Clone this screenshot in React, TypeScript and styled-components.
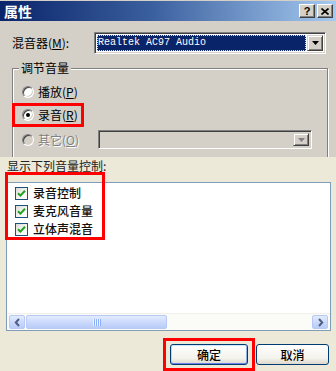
import React from 'react';
import styled, { createGlobalStyle, css } from 'styled-components';

const Global = createGlobalStyle`
  html, body { margin: 0; padding: 0; }
  body {
    width: 336px; height: 371px; overflow: hidden;
    font-family: "Noto Sans CJK SC", "Liberation Sans", sans-serif;
    font-size: 12px; color: #000;
  }
  * { box-sizing: border-box; }
`;

const Window = styled.div`
  width: 336px; height: 371px;
  display: flex; flex-direction: column;
  overflow: hidden;
  background: #d4d0c8;
`;

const TitleBar = styled.div`
  height: 20px; margin-top: 1px;
  display: flex; align-items: center; gap: 2px;
  padding: 0 3px 0 4px;
  background: linear-gradient(to right, #0a246a 0%, #3a5f9e 45%, #a6caf0 100%);
`;

const TitleText = styled.span`
  flex: 1;
  color: #fff; font-weight: bold; font-size: 14px; line-height: 16px;
`;

const CaptionButton = styled.button`
  width: 16px; height: 14px; padding: 0; margin: 0;
  display: flex; align-items: center; justify-content: center;
  background: #d4d0c8;
  border: 1px solid; border-color: #fff #404040 #404040 #fff;
  box-shadow: inset -1px -1px 0 #808080;
  font: bold 11px "Liberation Sans", sans-serif; line-height: 10px; color: #000;
`;

const ClassicPane = styled.div`
  height: 136px; flex: none;
  overflow: hidden;
  padding-top: 11px;
  background: #d4d0c8;
`;

const FieldRow = styled.div`
  display: flex; align-items: center;
  height: 22px; padding: 0 10px 0 12px;
`;

const FieldLabel = styled.span`
  width: 82px; line-height: 14px;
`;

const Sunken = css`
  border: 1px solid; border-color: #808080 #fff #fff #808080;
  box-shadow: inset 1px 1px 0 #404040, inset -1px -1px 0 #d4d0c8;
`;

const Combo = styled.div<{ $disabled?: boolean }>`
  ${Sunken};
  display: flex; align-items: stretch; gap: 1px;
  padding: 2px;
  background: ${p => (p.$disabled ? '#d4d0c8' : '#fff')};
`;

const MixerCombo = styled(Combo)`
  flex: 1; height: 22px;
`;

const SelectedValue = styled.span`
  flex: 1;
  padding-left: 1px;
  background: #0a246a; color: #fff;
  outline: 1px dotted #e8e4a0; outline-offset: -1px;
  font-family: "Liberation Mono", monospace; font-size: 10px; line-height: 16px;
  white-space: pre;
`;

const DropButton = styled.span<{ $disabled?: boolean }>`
  width: 16px; flex: none;
  display: flex; align-items: center; justify-content: center;
  background: #d4d0c8;
  border: 1px solid; border-color: #d4d0c8 #404040 #404040 #d4d0c8;
  box-shadow: inset 1px 1px 0 #fff, inset -1px -1px 0 #808080;
  color: ${p => (p.$disabled ? '#808080' : '#000')};
`;

const GroupBox = styled.fieldset`
  margin: 7px 8px 0 12px; padding: 0;
  height: 140px; min-width: 0;
  border: 1px solid #808080;
  box-shadow: 1px 1px 0 #fff, inset 1px 1px 0 #fff;
`;

const GroupLegend = styled.legend`
  margin-left: 6px; padding: 0 2px;
  line-height: 14px;
  background: #d4d0c8;
`;

const RadioList = styled.div`
  display: flex; flex-direction: column; gap: 5px;
  padding: 8px 0 0 2px;
`;

const RadioRow = styled.label<{ $highlight?: boolean; $stretch?: boolean }>`
  display: flex; align-items: center; gap: 4px;
  height: ${p => (p.$stretch ? '19px' : '18px')};
  width: ${p => (p.$stretch ? 'auto' : 'fit-content')};
  margin-top: ${p => (p.$stretch ? '1px' : '0')};
  padding: 0 3px 0 7px;
  ${p => p.$highlight && css`box-shadow: 0 0 0 3px #f00;`}
`;

const RadioDot = styled.span<{ $checked?: boolean; $disabled?: boolean }>`
  position: relative;
  width: 12px; height: 12px; flex: none;
  border-radius: 50%;
  border: 1px solid; border-color: #808080 #fff #fff #808080;
  box-shadow: inset 1px 1px 0 #404040, inset -1px -1px 0 #d4d0c8;
  background: ${p => (p.$disabled ? '#d4d0c8' : '#fff')};
  ${p => p.$checked && css`
    &::after {
      content: ''; position: absolute; left: 3px; top: 3px;
      width: 4px; height: 4px; border-radius: 50%; background: #000;
    }
  `}
`;

const RadioText = styled.span<{ $disabled?: boolean }>`
  line-height: 14px;
  color: ${p => (p.$disabled ? '#808080' : '#000')};
  text-shadow: ${p => (p.$disabled ? '1px 1px 0 #fff' : 'none')};
  white-space: nowrap;
`;

const OtherCombo = styled(Combo)`
  margin-left: auto; margin-right: 12px;
  width: 214px; height: 19px;
`;

const XpPane = styled.div`
  position: relative;
  flex: 1;
  display: flex; flex-direction: column;
  padding: 2px 5px 0 6px;
  background: #ece9d8;
`;

const SectionLabel = styled.div`
  line-height: 14px; padding-left: 1px;
  color: #222;
`;

const ListBox = styled.div`
  margin-top: 9px;
  height: 149px;
  display: flex; flex-direction: column;
  border: 1px solid #7f9db9;
  background: #fff;
`;

const ListItems = styled.div`
  flex: 1;
  padding: 1px 0 0 8px;
`;

const ListItem = styled.div`
  display: flex; align-items: center; gap: 5px;
  height: 18px;
`;

const CheckBox = styled.span`
  width: 13px; height: 13px; flex: none;
  display: flex; align-items: center; justify-content: center;
  border: 1px solid #1c5180;
  background: linear-gradient(135deg, #dcdcd7 0%, #f6f6f3 60%, #fff 100%);
`;

const ItemText = styled.span`
  line-height: 14px; color: #111; font-weight: 500;
`;

const HScroll = styled.div`
  height: 17px; flex: none;
  display: flex; align-items: stretch;
  padding: 1px 2px;
  background: #fbfbf8;
  border-top: 1px solid #f0efe9;
`;

const ScrollPart = css`
  border: 1px solid #b7c8f4;
  border-radius: 2px;
  background: linear-gradient(to bottom, #e3ebfe 0%, #c8d7fb 60%, #b9ccf8 100%);
  display: flex; align-items: center; justify-content: center;
`;

const ArrowButton = styled.span`
  ${ScrollPart};
  width: 16px;
  color: #4d6185;
`;

const Thumb = styled.span`
  ${ScrollPart};
  width: 141px;
  margin-left: 1px;
`;

const Track = styled.span`
  flex: 1;
`;

const ButtonRow = styled.div`
  display: flex; justify-content: flex-end; gap: 8px;
  margin-top: 13px;
  padding-right: 2px;
`;

const Frame = styled.span`
  display: inline-flex;
  margin: -6px -7px;
  padding: 3px 4px;
  border: 3px solid #f00;
`;

const XpButton = styled.button<{ $default?: boolean }>`
  width: ${p => (p.$default ? '78px' : '73px')}; height: 21px;
  padding: 0;
  border: 1px solid #003c74; border-radius: 3px;
  background: linear-gradient(to bottom, #fff 0%, #f3f2ec 70%, #dcd8cc 100%);
  font-family: "Noto Sans CJK SC", sans-serif; font-size: 12px; font-weight: 500;
  line-height: 14px; color: #000;
  ${p => p.$default && css`
    box-shadow: inset 0 1px 0 #cee7ff, inset 0 -1px 0 #6982ee, inset 1px 0 0 #b8d4fb, inset -1px 0 0 #89ade4;
  `}
`;

const CheckHighlight = styled.div`
  position: absolute; left: 5px; top: 15px;
  width: 100px; height: 68px;
  border: 3px solid #f00;
  pointer-events: none;
`;

const Tri = ({ color = 'currentColor' }: { color?: string }) => (
  <svg width="7" height="4" viewBox="0 0 7 4"><path d="M0 0h7L3.5 4z" fill={color} /></svg>
);

const Check = () => (
  <svg width="9" height="9" viewBox="0 0 9 9">
    <path d="M1 4.2 L3.4 6.6 L8 1.8" fill="none" stroke="#21a121" strokeWidth="2" />
  </svg>
);

const Chevron = ({ dir }: { dir: 'left' | 'right' }) => (
  <svg width="7" height="9" viewBox="0 0 7 9">
    <path d={dir === 'left' ? 'M5 1 L1.8 4.5 L5 8' : 'M2 1 L5.2 4.5 L2 8'} fill="none" stroke="#4d6185" strokeWidth="2" />
  </svg>
);

const Grip = () => (
  <svg width="8" height="7" viewBox="0 0 8 7">
    {[0, 2, 4, 6].map(x => (
      <rect key={x} x={x} y="0" width="1" height="7" fill="#eef4fe" />
    ))}
    {[1, 3, 5, 7].map(x => (
      <rect key={x} x={x} y="0" width="1" height="7" fill="#8cb0f8" />
    ))}
  </svg>
);

const CloseGlyph = () => (
  <svg width="8" height="7" viewBox="0 0 8 7">
    <path d="M0.5 0.5 L7.5 6.5 M7.5 0.5 L0.5 6.5" stroke="#000" strokeWidth="1.6" />
  </svg>
);

const items = ['录音控制', '麦克风音量', '立体声混音'];

export default function App() {
  return (
    <>
      <Global />
      <Window>
        <TitleBar>
          <TitleText>属性</TitleText>
          <CaptionButton>?</CaptionButton>
          <CaptionButton><CloseGlyph /></CaptionButton>
        </TitleBar>

        <ClassicPane>
          <FieldRow>
            <FieldLabel>混音器(<u>M</u>):</FieldLabel>
            <MixerCombo>
              <SelectedValue>Realtek AC97 Audio</SelectedValue>
              <DropButton><Tri /></DropButton>
            </MixerCombo>
          </FieldRow>

          <GroupBox>
            <GroupLegend>调节音量</GroupLegend>
            <RadioList>
              <RadioRow>
                <RadioDot />
                <RadioText>播放(<u>P</u>)</RadioText>
              </RadioRow>
              <RadioRow $highlight>
                <RadioDot $checked />
                <RadioText>录音(<u>R</u>)</RadioText>
              </RadioRow>
              <RadioRow $stretch>
                <RadioDot $disabled />
                <RadioText $disabled>其它(<u>O</u>)</RadioText>
                <OtherCombo $disabled>
                  <Track />
                  <DropButton $disabled><Tri /></DropButton>
                </OtherCombo>
              </RadioRow>
            </RadioList>
          </GroupBox>
        </ClassicPane>

        <XpPane>
          <SectionLabel>显示下列音量控制:</SectionLabel>
          <ListBox>
            <ListItems>
              {items.map(t => (
                <ListItem key={t}>
                  <CheckBox><Check /></CheckBox>
                  <ItemText>{t}</ItemText>
                </ListItem>
              ))}
            </ListItems>
            <HScroll>
              <ArrowButton><Chevron dir="left" /></ArrowButton>
              <Thumb><Grip /></Thumb>
              <Track />
              <ArrowButton><Chevron dir="right" /></ArrowButton>
            </HScroll>
          </ListBox>
          <ButtonRow>
            <Frame>
              <XpButton $default>确定</XpButton>
            </Frame>
            <XpButton>取消</XpButton>
          </ButtonRow>
          <CheckHighlight />
        </XpPane>
      </Window>
    </>
  );
}
